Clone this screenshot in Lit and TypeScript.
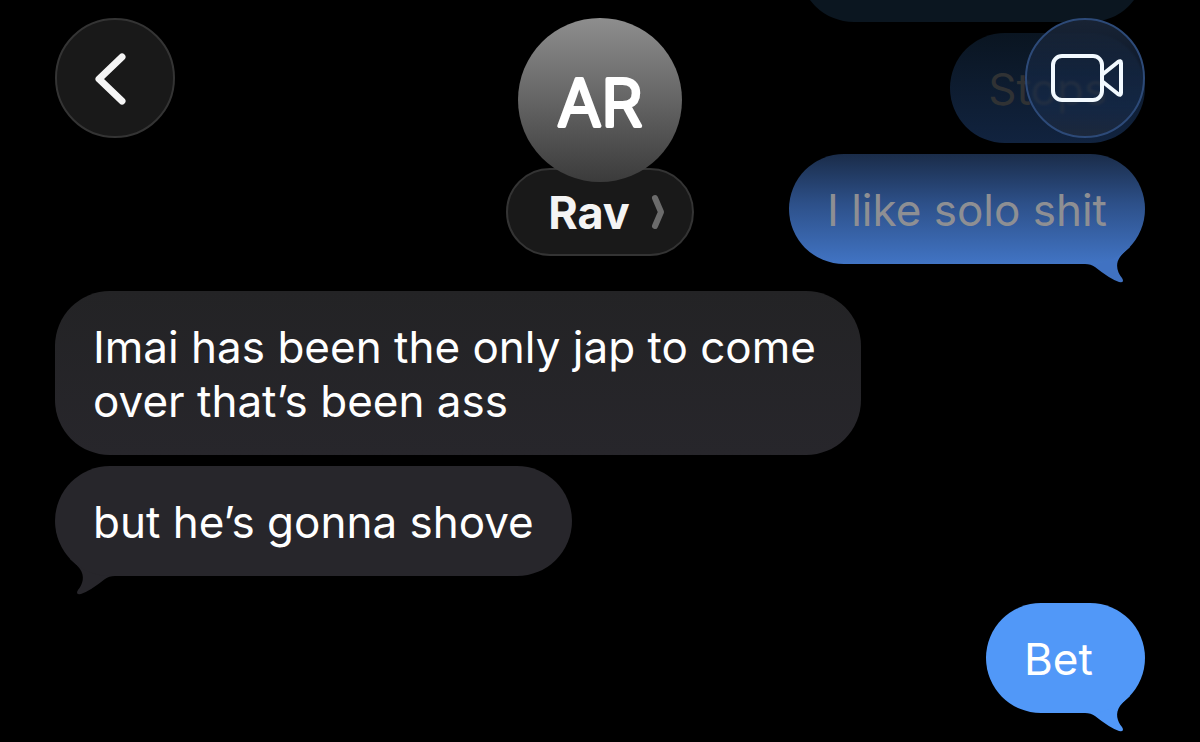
import { LitElement, html, css } from "lit";
import { customElement, property } from "lit/decorators.js";

type Side = "sent" | "received";
interface Message { side: Side; text: string; tail?: boolean; tone: string; }

const MESSAGES: Message[] = [
  { side: "sent", text: "", tone: "ghost" },
  { side: "sent", text: "Stops", tone: "dim" },
  { side: "sent", text: "I like solo shit", tone: "fade", tail: true },
  { side: "received", text: "Imai has been the only jap to come over that’s been ass", tone: "graphite" },
  { side: "received", text: "but he’s gonna shove", tone: "slate", tail: true },
  { side: "sent", text: "Bet", tone: "blue", tail: true },
];

@customElement("message-bubble")
export class MessageBubble extends LitElement {
  @property() side: Side = "sent";
  @property() tone = "blue";
  @property({ type: Boolean }) tail = false;

  static styles = css`
    :host { display: block; position: relative; isolation: isolate; max-width: 806px; box-sizing: border-box; }
    .bubble { box-sizing: border-box; min-width: 159px; min-height: 110px; border-radius: 55px; padding: 29px 38px 27px; font-size: 44px; line-height: 54px; color: #fff; }
    .bubble.ghost { width: 346px; background: #0b1620; }
    .dim { background: linear-gradient(#0a1521, #11233f); color: #303234; }
    .fade { background: linear-gradient(#1a2c49, #2d5089 45%, #4174c4); color: #8e8f93; }
    .graphite { background: linear-gradient(#232325, #27262b); }
    .slate { background: #27262b; }
    .blue { background: #5198f8; }
    .tail { position: absolute; z-index: -1; bottom: -19px; width: 62px; height: 60px; }
    .tail.sent { right: 0; }
    .tail.received { left: 0; transform: scaleX(-1); }
    .tail.fade, .tail.slate, .tail.blue { background: none; }
    .tail.fade { fill: #4072c2; }
    .tail.slate { fill: #27262b; }
    .tail.blue { fill: #5198f8; }
  `;

  render() {
    return html`
      ${this.tail ? html`<svg class="tail ${this.side} ${this.tone}" viewBox="0 0 62 60" aria-hidden="true">
        <path d="M2 41 Q8 41 12 44 Q27 56 36 59 Q42 60 39 55 C34 49 32 41 37 34 Q40 30 47 24 L20 20 Z"></path>
      </svg>` : null}
      <div class="bubble ${this.tone}"><slot></slot></div>`;
  }
}

@customElement("app-root")
export class AppRoot extends LitElement {
  static styles = css`
    :host { display: block; position: relative; min-height: 100vh; overflow: hidden; background: #000; font-family: Inter, "Liberation Sans", sans-serif; }
    .thread { display: flex; flex-direction: column; gap: 11px; padding: 0 55px 29px; margin-top: -88px; }
    .sent { align-self: flex-end; }
    .received { align-self: flex-start; }
    .turn { margin-top: 16px; }
    .header { position: absolute; inset: 0 0 auto; display: grid; grid-template-columns: 1fr auto 1fr; align-items: start; padding: 18px 55px 0; }
    button { font: inherit; color: #fff; padding: 0; margin: 0; border: 0; background: none; box-sizing: border-box; }
    .round { width: 120px; height: 120px; border-radius: 50%; border: 2px solid #343434; background: #191919; display: grid; place-items: center; }
    .video { justify-self: end; background: linear-gradient(#182334, #172a4899 45%, #172c4d99 75%, #1c283b); backdrop-filter: blur(1px); border-color: #2d4a78; }
    .round svg { width: 116px; height: 116px; }
    .contact { display: flex; flex-direction: column; align-items: center; }
    .avatar { position: relative; width: 164px; height: 164px; border-radius: 50%; background: linear-gradient(#8e8e8e, #3b3b3b); }
    .avatar svg { display: block; width: 100%; height: 100%; }
    .initials { font-size: 65px; font-weight: 300; text-anchor: middle; fill: #fff; stroke: #fff; stroke-width: 4px; stroke-linejoin: round; }
    .name { display: flex; align-items: center; justify-content: center; gap: 21px; width: 188px; height: 88px; margin-top: -14px; border-radius: 44px; border: 2px solid #343434; background: #191919; font-size: 45px; font-weight: 700; color: #f4f4f4; padding-left: 14px; }
    .name svg { flex: none; width: 15px; height: 36px; }
  `;

  render() {
    return html`
      <main class="thread">
        ${MESSAGES.map((m, i) => html`<message-bubble
          class="${m.side} ${i > 0 && MESSAGES[i - 1].side !== m.side ? "turn" : ""}"
          .side=${m.side} .tone=${m.tone} .tail=${!!m.tail}>${m.text}</message-bubble>`)}
      </main>
      <header class="header">
        <button class="round" aria-label="Back">
          <svg viewBox="0 0 116 116" fill="none" stroke="#f5f5f5" stroke-width="7" stroke-linecap="round" stroke-linejoin="round"><path d="M65 37 L42 59 L65 81"></path></svg>
        </button>
        <div class="contact">
          <div class="avatar"><svg viewBox="0 0 164 164"><text class="initials" x="82" y="108">AR</text></svg></div>
          <button class="name">Rav
            <svg viewBox="0 0 15 36" fill="none" stroke="#6b6b6b" stroke-width="6" stroke-linecap="round" stroke-linejoin="round" aria-hidden="true"><path d="M4 4 L10 18 L4 32"></path></svg>
          </button>
        </div>
        <button class="round video" aria-label="Video call">
          <svg viewBox="0 0 116 116" fill="none" stroke="#f2f9ff" stroke-width="4" stroke-linecap="round" stroke-linejoin="round">
            <rect x="26" y="36" width="49" height="44" rx="9"></rect><path d="M76 54 L91 42 Q94 40 94 43 V73 Q94 76 91 74 L76 62"></path>
          </svg>
        </button>
      </header>`;
  }
}
